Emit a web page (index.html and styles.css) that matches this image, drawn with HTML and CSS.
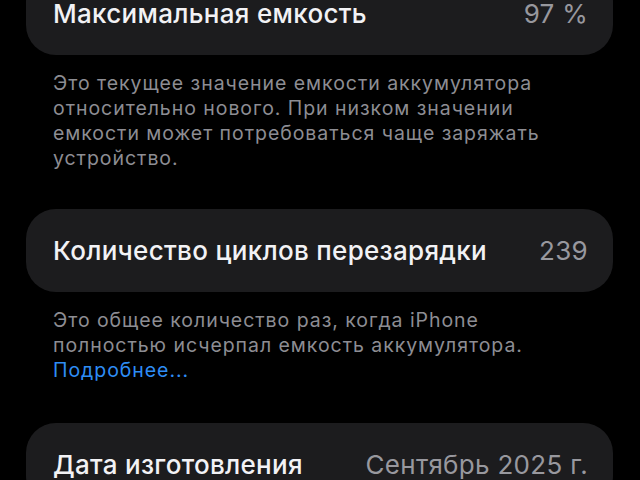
FILE: index.html
```html
<!DOCTYPE html>
<html lang="ru">
<head>
<meta charset="utf-8">
<link rel="stylesheet" href="styles.css">
</head>
<body>
<main class="list">
  <section class="group">
    <div class="card">
      <span class="title">Максимальная емкость</span>
      <span class="value">97 %</span>
    </div>
    <p class="footer">Это текущее значение емкости аккумулятора<br>относительно нового. При низком значении<br>емкости может потребоваться чаще заряжать<br>устройство.</p>
  </section>
  <section class="group">
    <div class="card">
      <span class="title">Количество циклов перезарядки</span>
      <span class="value">239</span>
    </div>
    <p class="footer footer-last">Это общее количество раз, когда iPhone<br>полностью исчерпал емкость аккумулятора.<br><a class="link" href="#">Подробнее...</a></p>
  </section>
  <section class="group">
    <div class="card">
      <span class="title">Дата изготовления</span>
      <span class="value">Сентябрь 2025 г.</span>
    </div>
  </section>
</main>
</body>
</html>
```
FILE: styles.css
```css
html, body {
  margin: 0;
  padding: 0;
  background: #000;
  height: 100%;
  overflow: hidden;
}
body {
  font-family: Inter, Roboto, "Liberation Sans", sans-serif;
  -webkit-font-smoothing: antialiased;
}
.list {
  display: flex;
  flex-direction: column;
  margin-top: -28px;
  padding: 0 27px 0 26px;
}
.group {
  display: flex;
  flex-direction: column;
}
.card {
  flex: none;
  height: 83px;
  background: #1c1c1e;
  border-radius: 30px;
  display: flex;
  align-items: center;
  justify-content: space-between;
  padding: 0 25px 0 27px;
  font-size: 26px;
  letter-spacing: 0.3px;
}
.title {
  color: #f2f2f5;
  font-weight: 500;
}
.value {
  color: #98989e;
  font-weight: 400;
}
.footer {
  margin: 16px 0 38px 27px;
  font-size: 19.5px;
  line-height: 25px;
  letter-spacing: 0.95px;
  color: #8d8d93;
}
.footer-last {
  margin-bottom: 40px;
}
.link {
  color: #2e8df5;
  text-decoration: none;
}
```
